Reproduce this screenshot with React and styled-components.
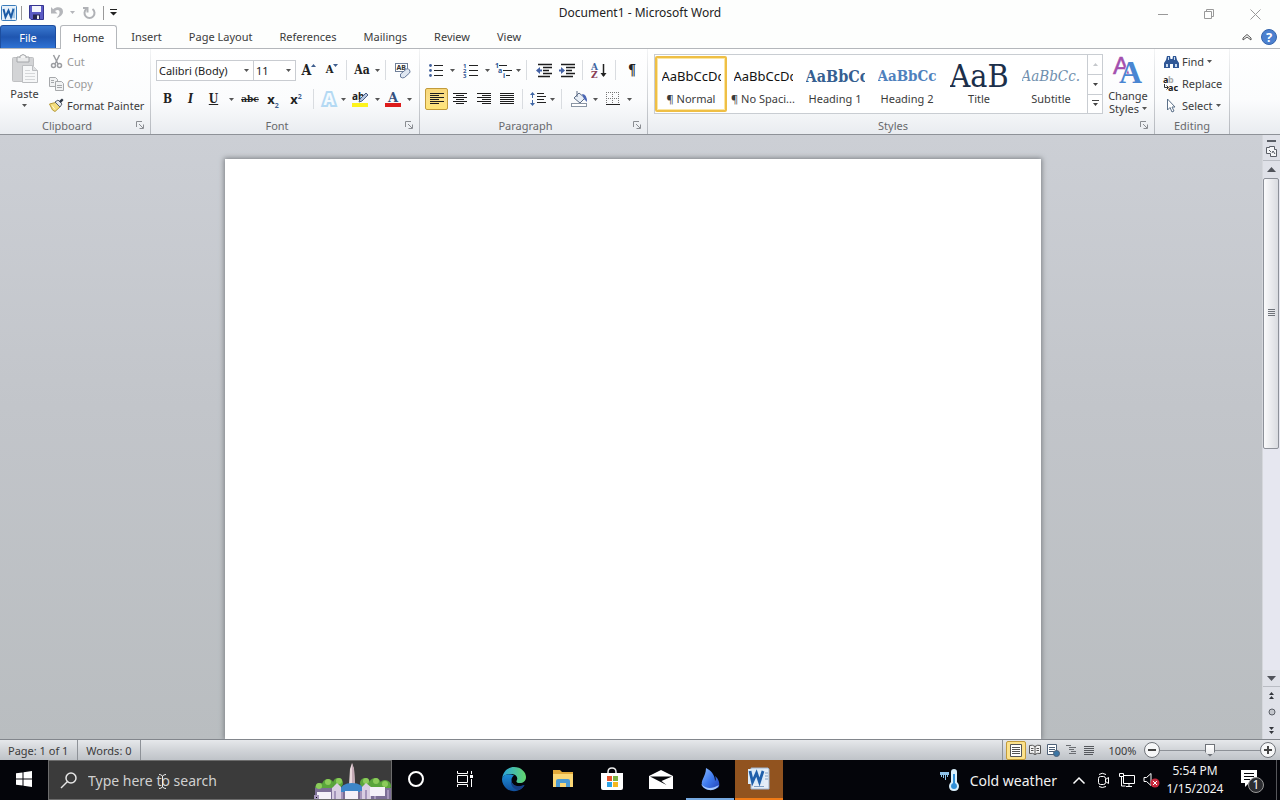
// Import React
import React from 'react';
// Import Styled Components
import styled, { createGlobalStyle, css } from 'styled-components';

// Styles
const GlobalStyle = createGlobalStyle`
  * {
    box-sizing: border-box;
  }
  body {
    margin: 0;
    font-family: 'Noto Sans', 'Open Sans', sans-serif;
    font-size: 11px;
    color: #3b3b3b;
    overflow: hidden;
  }
  button, select, input {
    font: inherit;
    color: inherit;
    border: 0;
    padding: 0;
    margin: 0;
    background: none;
    outline: none;
  }
  svg {
    display: block;
    flex: none;
    overflow: visible;
  }
`;

const Desktop = styled.div`
  display: flex;
  flex-direction: column;
  height: 100vh;
  background: #fdfefd;
`;

// Title bar
const TitleBar = styled.header`
  display: grid;
  grid-template-columns: 1fr auto 1fr;
  align-items: center;
  height: 25px;
`;

const QuickAccess = styled.div`
  display: flex;
  align-items: center;
  gap: 3px;
  height: 22px;
  padding-left: 1px;
`;

const PlainButton = styled.button`
  display: flex;
  align-items: center;
  justify-content: center;
  flex: none;
  width: ${(props) => props.$w || 22}px;
`;

const Title = styled.h1`
  margin: 0;
  font-size: 12px;
  font-weight: normal;
  color: #222;
`;

const WindowButtons = styled.div`
  display: flex;
  justify-content: flex-end;
  padding: 3px 2px 0 0;
`;

// Tabs
const TabBar = styled.nav`
  display: flex;
  height: 24px;
  border-bottom: 1px solid #b4b7bb;
`;

const FileTab = styled.button`
  width: 56px;
  margin-right: 4px;
  color: white;
  border: 1px solid #1d4e9f;
  border-bottom: 0;
  border-radius: 3px 3px 0 0;
  background: linear-gradient(#3a78cf, #1f56b0 50%, #2f72d4);
`;

const Tab = styled.button`
  padding: 0 13px 0 14px;
  ${(props) =>
    props.$active &&
    css`
      padding: 0 12px;
      margin-bottom: -1px;
      border: 1px solid #b4b7bb;
      border-bottom: 0;
      border-radius: 3px 3px 0 0;
      background: white;
    `}
`;

const TabTools = styled.div`
  display: flex;
  align-items: center;
  margin-left: auto;
`;

// Ribbon
const RibbonBar = styled.div`
  display: flex;
  height: 86px;
  flex: none;
  background: linear-gradient(#ffffff, #fbfcfd 60%, #e9ecf0);
  border-bottom: 1px solid #8e9298;
`;

const Group = styled.section`
  display: flex;
  flex-direction: column;
  flex: none;
  width: ${(props) => props.$w}px;
  border-right: 1px solid;
  border-image: linear-gradient(#f4f5f6, #b3b7bd) 1;
`;

const GroupBody = styled.div`
  display: flex;
  flex: 1;
  min-height: 0;
  padding: ${(props) => props.$pad || '0'};
`;

const GroupFooter = styled.div`
  display: flex;
  align-items: center;
  height: 18px;
  padding: 0 2px;
  color: #68696c;
`;

const GroupTitle = styled.span`
  flex: 1;
  text-align: center;
`;

const Rows = styled.div`
  display: flex;
  flex-direction: column;
  gap: ${(props) => props.$gap || 0}px;
`;

const Row = styled.div`
  display: flex;
  align-items: center;
  height: 22px;
`;

const BigButton = styled.button`
  display: flex;
  flex-direction: column;
  align-items: center;
  width: ${(props) => props.$w}px;
  padding-top: ${(props) => props.$top || 0}px;
  line-height: 13px;
  white-space: nowrap;

  > svg {
    margin-bottom: 3px;
  }
`;

const LabelButton = styled.button`
  display: flex;
  align-items: center;
  gap: ${(props) => props.$gap || 3}px;
  height: 22px;
  color: ${(props) => (props.disabled ? '#9a9a9a' : '#3b3b3b')};
  white-space: nowrap;
`;

const IconSlot = styled.span`
  display: grid;
  place-items: center;
  width: 16px;
`;

const PasteArrow = styled.span`
  padding-top: 4px;
`;

const WithArrow = styled.span`
  display: flex;
  align-items: center;
  gap: 3px;
`;

const ToolButton = styled.button`
  display: flex;
  align-items: center;
  justify-content: center;
  flex: none;
  width: ${(props) => props.$w}px;
  height: 22px;
  ${(props) =>
    props.$on &&
    css`
      border: 1px solid #c29b3b;
      border-radius: 2px;
      background: linear-gradient(#f8d779, #fbe08a 50%, #ffe575);
    `}
`;

const Letter = styled.span`
  font-family: 'DejaVu Serif Condensed', 'DejaVu Serif', serif;
  font-size: ${(props) => props.$size || 12}px;
  line-height: 16px;
  font-weight: ${(props) => (props.$light ? 'normal' : 'bold')};
  font-style: ${(props) => (props.$italic ? 'italic' : 'normal')};
  text-decoration: ${(props) => props.$line || 'none'};
  color: #222;
`;

const Script = styled.span`
  font-size: 13px;
  font-weight: bold;
  line-height: 16px;
  color: #222;

  sub,
  sup {
    font-size: 7px;
    line-height: 0;
    color: #3f5f8f;
  }
`;

const Rule = styled.span`
  flex: none;
  width: 1px;
  height: ${(props) => props.$h || 20}px;
  margin: 0 ${(props) => (props.$w - 1) >> 1}px;
  background: ${(props) => props.$color || '#d9dce0'};
`;

const Combo = styled.label`
  display: grid;
  align-items: center;
  width: ${(props) => props.$w}px;
  height: 21px;
  border: 1px solid #c9ccd1;
  background: white;

  & + & {
    border-left: 0;
  }

  > * {
    grid-area: 1 / 1;
  }

  > svg {
    justify-self: end;
    margin-right: 4px;
    pointer-events: none;
  }
`;

const Select = styled.select`
  appearance: none;
  width: 100%;
  padding-left: 2px;
  color: #222;
`;

// Styles gallery
const Gallery = styled.div`
  display: flex;
  height: 60px;
  border: 1px solid #c9cdd2;
  background: white;
`;

const StyleItem = styled.button`
  display: flex;
  flex-direction: column;
  align-items: center;
  width: 72px;
  height: 56px;
  margin-top: 1px;
  padding: ${(props) => (props.$on ? 3 : 5)}px 0 0;
  ${(props) =>
    props.$on &&
    css`
      border: 2px solid #efbf45;
      border-radius: 2px;
      box-shadow: inset 0 0 0 1px #fbe6a2;
    `}
`;

const Sample = styled.span`
  display: flex;
  align-items: center;
  flex: none;
  width: 59px;
  height: 30px;
  overflow: hidden;
  white-space: nowrap;
  font-family: ${(props) => props.$font || "'Noto Sans', sans-serif"};
  font-size: ${(props) => props.$size || 13}px;
  font-weight: ${(props) => props.$weight || 'normal'};
  font-style: ${(props) => props.$style || 'normal'};
  color: ${(props) => props.$color || '#111'};
`;

const GalleryScroll = styled.div`
  display: grid;
  grid-template-rows: repeat(3, 1fr);
  width: 15px;
  border-left: 1px solid #c9cdd2;

  button {
    display: grid;
    place-items: center;
  }

  button + button {
    border-top: 1px solid #c9cdd2;
  }
`;

// Document
const Workspace = styled.main`
  display: flex;
  flex: 1;
  min-height: 0;
  background: linear-gradient(#cccfd5, #c2c5ca 45%, #b9bdc0);
`;

const Canvas = styled.div`
  display: flex;
  justify-content: center;
  flex: 1;
  padding: 24px 0 0 3px;
  overflow: hidden;
`;

const Page = styled.article`
  width: 816px;
  background: white;
  box-shadow: 0 0 5px 1px #7d8085;
`;

const ScrollColumn = styled.aside`
  display: flex;
  flex-direction: column;
  width: 18px;
  border-left: 1px solid #d5d7dc;
  background: #dfe1e8;
`;

const ScrollButton = styled.button`
  display: grid;
  place-items: center;
  flex: none;
  height: ${(props) => props.$h || 18}px;
  border-bottom: ${(props) => (props.$divided ? '1px solid #b9bcc3' : '0')};
`;

const ScrollTrack = styled.div`
  flex: 1;
  padding-right: 1px;
  background: #e6e7f0;
`;

const ScrollThumb = styled.div`
  display: grid;
  place-items: center;
  height: 55%;
  border: 1px solid #8d9199;
  border-radius: 2px;
  background: linear-gradient(90deg, #fbfbfc, #d9dbe0);
`;

// Status bar
const StatusBar = styled.footer`
  display: flex;
  align-items: center;
  justify-content: space-between;
  height: 21px;
  flex: none;
  border-top: 1px solid #82868c;
  background: linear-gradient(#e6e8eb, #d3d6da 45%, #bfc3c8);
`;

const StatusSide = styled.div`
  display: flex;
  align-items: center;
  height: 100%;
`;

const StatusText = styled.span`
  padding: 0 9px 0 8px;
  line-height: 19px;
`;

const ViewGroup = styled.div`
  display: flex;
  padding-left: 3px;
`;

const ViewButton = styled.button`
  display: grid;
  place-items: center;
  width: 18px;
  height: 19px;
  ${(props) =>
    props.$on &&
    css`
      width: 20px;
      border: 1px solid #c29b3b;
      border-radius: 2px;
      background: #fce28c;
    `}
`;

const Percent = styled.button`
  width: 46px;
  padding-left: 3px;
`;

const RoundButton = styled.button`
  display: grid;
  place-items: center;
  flex: none;
  width: 16px;
  height: 16px;
  border: 1px solid #6f7379;
  border-radius: 50%;
  background: #f6f7f8;
`;

const ZoomRange = styled.input`
  appearance: none;
  width: 100px;
  height: 16px;
  background: linear-gradient(#8d9197, #8d9197) center / 100% 1px no-repeat;

  &::-webkit-slider-thumb {
    appearance: none;
    width: 10px;
    height: 13px;
    background: linear-gradient(#ffffff, #e9eaec) center 1px / 8px 9px no-repeat
      #6f7379;
    clip-path: polygon(0 0, 100% 0, 100% 65%, 50% 100%, 0 65%);
  }
`;

const Corner = styled.span`
  width: 4px;
`;

// Taskbar
const TaskBar = styled.div`
  display: flex;
  height: 40px;
  flex: none;
  background: #04050a;
  color: #f2f2f2;
`;

const TaskList = styled.div`
  display: flex;
  gap: 1px;
`;

const TaskButton = styled.button`
  display: grid;
  place-items: center;
  width: 48px;
  height: 40px;
  border-bottom: 2px solid ${(props) => props.$line || 'transparent'};
  background: ${(props) => props.$bg || 'transparent'};
`;

const SearchBox = styled.label`
  position: relative;
  display: flex;
  align-items: center;
  gap: 11px;
  width: 344px;
  padding-left: 12px;
  overflow: hidden;
  background: #3b3b3b;
  border: 1px solid #6c6c6c;
`;

const SearchInput = styled.input`
  flex: 1;
  min-width: 0;
  font-size: 14px;

  &::placeholder {
    color: #d0d0d0;
    opacity: 1;
  }
`;

const Pointer = styled.svg`
  position: absolute;
  left: 108px;
  top: 12px;
`;

const Tray = styled.div`
  display: flex;
  align-items: center;
  margin-left: auto;
`;

const TrayIcon = styled.button`
  display: grid;
  place-items: center;
  width: 24px;
  height: 40px;
`;

const Weather = styled.button`
  display: flex;
  align-items: center;
  gap: 10px;
  margin-right: 10px;
  font-size: 14px;
  white-space: nowrap;
`;

const Clock = styled.time`
  width: 64px;
  font-size: 12px;
  line-height: 18px;
  text-align: center;
`;

const Notifications = styled.button`
  display: grid;
  place-items: center;
  width: 50px;
  height: 40px;
  border-right: 1px solid #55565a;
  margin-right: 3px;
`;

// Small arrow used by every drop down
const Arrow = ({ color = '#555' }) => (
  <svg width="5" height="3" viewBox="0 0 5 3">
    <path d="M0 0h5L2.500 3z" fill={color} />
  </svg>
);

const Drop = ({ w, label }) => (
  <ToolButton $w={w} aria-label={label}>
    <Arrow />
  </ToolButton>
);

const Launcher = () => (
  <svg width="8" height="8" viewBox="0 0 8 8" fill="none" stroke="#8a8d92">
    <path d="M.5 6V.5H6M3 3l4 4M7.500 3.500v4h-4" />
  </svg>
);

// Horizontal lines, each one given as [x, width]
const Lines = ({ rows, width = 14, step = 2 }) => (
  <svg width={width} height={rows.length * step} fill="#1d1d1d">
    {rows.map(([x, w], i) => (
      <rect key={i} x={x} y={i * step} width={w} height="1" />
    ))}
  </svg>
);

const WordLogo = () => (
  <svg width="16" height="16" viewBox="0 0 16 16">
    <rect x=".5" y=".5" width="15" height="15" rx="1" fill="#e7f1fa" stroke="#3b7cba" />
    <path d="M11 3h3v10h-3z" fill="#a9cbe8" />
    <path d="M2.500 4l2 8L7.500 5.500 10 12l2.500-8" fill="none" stroke="#1d5ca6" strokeWidth="2" />
  </svg>
);

const SaveIcon = () => (
  <svg width="15" height="15" viewBox="0 0 15 15">
    <path d="M.5.5h14v14H2l-1.500-1.500z" fill="#5b5bc4" stroke="#35358f" />
    <path d="M3 1h9v6H3z" fill="#f3f5fb" />
    <path d="M4 9.500h7V14H4z" fill="#26264f" />
    <path d="M8 10.500h2V14H8z" fill="#eee" />
  </svg>
);

const UndoIcon = () => (
  <svg width="14" height="14" viewBox="0 0 14 14">
    <path d="M1 1v6.500h6.500L5 5c3-2 5-.5 4.500 2-.3 2-1.500 3.500-3 5 4-1 6.500-3.500 6.500-6.500C13 1 7 0 3.200 3.200z" fill="#b4b6ba" />
  </svg>
);

const RedoIcon = () => (
  <svg width="13" height="13" viewBox="0 0 13 13" fill="none" stroke="#b0b2b6" strokeWidth="2">
    <path d="M3.500 3A5 5 0 1 0 9.500 3" />
    <path d="M0 2h4.500v4.500" />
  </svg>
);

const PasteIcon = () => (
  <svg width="28" height="30" viewBox="0 0 28 30">
    <rect x="1.500" y="3.500" width="21" height="24" rx="1" fill="#d3d4d6" stroke="#c0c1c3" />
    <path d="M6 3h12v5H6z" fill="#e9eaeb" stroke="#a4a6a9" />
    <path d="M9 4V2q3-3 6 0v2" fill="#f4f4f4" stroke="#a4a6a9" />
    <path d="M11.500 11.500h10l5 5v12h-15z" fill="#f6f7f8" stroke="#bcbec1" />
    <path d="M21.500 11.500v5h5" fill="#dfe0e2" stroke="#bcbec1" />
    <path d="M14 19.500h10M14 22.500h10M14 25.500h10M14 16.500h5" stroke="#d5d7d9" />
  </svg>
);

const CutIcon = () => (
  <svg width="15" height="15" viewBox="0 0 15 15" fill="none" stroke="#9b9da1" strokeWidth="1.500">
    <path d="M4.500 1L9 10M10.500 1L6 10" />
    <circle cx="4.500" cy="11.500" r="2" />
    <circle cx="10.500" cy="11.500" r="2" />
  </svg>
);

const CopyIcon = () => (
  <svg width="15" height="14" viewBox="0 0 15 14" fill="#f1f2f3" stroke="#a6a8ab">
    <path d="M.5.5h6l2 2v7h-8z" />
    <path d="M6.500 4.500h6l2 2v7h-8z" />
    <path d="M2 3.500h3M2 5.500h3M8 8.500h5M8 10.500h5" />
  </svg>
);

const PainterIcon = () => (
  <svg width="15" height="14" viewBox="0 0 15 14">
    <path d="M.5 6l6-1.500L11 9l-5 4.500L3.500 12z" fill="#f3dd7c" stroke="#b79c3c" />
    <path d="M3 7.500l3 4" stroke="#fff8d0" />
    <path d="M6 4l3-2 4 4-2 3z" fill="#e4e8ee" stroke="#5a6270" />
    <path d="M10 3L13 .5 14.500 2 12 5z" fill="#2f3846" />
  </svg>
);

const ClearIcon = () => (
  <svg width="17" height="17" viewBox="0 0 17 17">
    <rect x="1.500" y="1.500" width="12" height="8" fill="#fff" stroke="#6f7f98" />
    <text x="2.500" y="8" fontSize="7" fontWeight="bold" fill="#333">AB</text>
    <path d="M6.500 12l6-5q2-1 3 1t0 3l-5 4.500q-2 1-4-.5z" fill="#dfe7f2" stroke="#66799a" />
  </svg>
);

const EffectsIcon = () => (
  <svg width="18" height="18" viewBox="0 0 18 18">
    <text x="9" y="15" fontSize="16" fontWeight="bold" textAnchor="middle" fill="#f5fbff" stroke="#b4d9f3" strokeWidth="4" paintOrder="stroke">A</text>
    <path d="M0 0" stroke="none" />
  </svg>
);

const HighlightIcon = () => (
  <svg width="17" height="17" viewBox="0 0 17 17">
    <rect y="12" width="16" height="4" fill="#fdf31d" />
    <text x="0" y="9" fontSize="10" fontWeight="bold" fill="#222">ab</text>
    <path d="M7 11l1-3 6-6 2 2-6 6z" fill="#b6c6e0" stroke="#4a5d84" />
  </svg>
);

const FontColorIcon = () => (
  <svg width="16" height="17" viewBox="0 0 16 17">
    <rect y="12" width="16" height="4" fill="#dd1c1c" />
    <text x="8" y="11" fontSize="13" fontWeight="bold" textAnchor="middle" fontFamily="DejaVu Serif" fill="#34517f">A</text>
  </svg>
);

const BulletsIcon = () => (
  <svg width="14" height="13" viewBox="0 0 14 13">
    <path d="M5 1.500h9M5 6.500h9M5 11.500h9" stroke="#222" />
    <g fill="#41619b">
      <circle cx="1.500" cy="1.500" r="1.400" />
      <circle cx="1.500" cy="6.500" r="1.400" />
      <circle cx="1.500" cy="11.500" r="1.400" />
    </g>
  </svg>
);

const NumbersIcon = () => (
  <svg width="15" height="15" viewBox="0 0 15 15">
    <path d="M6 2.500h9M6 7.500h9M6 12.500h9" stroke="#222" />
    <g fill="#2d5594" fontSize="6" fontWeight="bold">
      <text x="0" y="5">1</text>
      <text x="0" y="10">2</text>
      <text x="0" y="15">3</text>
    </g>
  </svg>
);

const MultiLevelIcon = () => (
  <svg width="17" height="15" viewBox="0 0 17 15">
    <path d="M4 2.500h8M8 7.500h9M11 12.500h4" stroke="#222" />
    <g fill="#2d5594" fontSize="7" fontWeight="bold">
      <text x="0" y="5">1</text>
      <text x="3" y="10">a</text>
      <text x="8" y="15">i</text>
    </g>
  </svg>
);

const IndentIcon = ({ out }) => (
  <svg width="16" height="13" viewBox="0 0 16 13">
    <path d="M2 .5h14M7 3.500h9M7 6.500h6M7 9.500h9M2 12.500h12" stroke="#1d1d1d" strokeWidth="1.500" />
    <path d={out ? 'M0 6.500L4 3v7z' : 'M6 6.500L2 3v7z'} fill="#4562a5" />
    <path d={out ? 'M3 6.500h3' : 'M0 6.500h3'} stroke="#4562a5" strokeWidth="2" />
  </svg>
);

const SortIcon = () => (
  <svg width="16" height="17" viewBox="0 0 16 17">
    <g fontFamily="DejaVu Serif" fontSize="9" fontWeight="bold">
      <text x="0" y="8" fill="#3d64a0">A</text>
      <text x="0" y="16" fill="#8a3d54">Z</text>
    </g>
    <path d="M12.500 2v12" stroke="#222" strokeWidth="1.500" />
    <path d="M9.500 11h6l-3 4z" fill="#222" />
  </svg>
);

const SpacingIcon = () => (
  <svg width="16" height="16" viewBox="0 0 16 16">
    <path d="M7 2.500h7M7 5.500h9M7 8.500h7M7 11.500h9" stroke="#222" />
    <path d="M2.500 3v10" stroke="#3f66a5" strokeDasharray="4 2" />
    <path d="M0 4l2.500-3L5 4zM0 12l2.500 3L5 12z" fill="#3f66a5" />
  </svg>
);

const FillIcon = () => (
  <svg width="17" height="16" viewBox="0 0 17 16">
    <path d="M3 7l5-5 6 5-5 5z" fill="#e8eef6" stroke="#5c6d86" />
    <path d="M6 0v6" stroke="#5c6d86" />
    <path d="M11 3q5 0 5 8l-3-3z" fill="#4a66b5" />
    <rect x=".5" y="12.500" width="15" height="3" fill="#fff" stroke="#8a95a3" />
  </svg>
);

const BordersIcon = () => (
  <svg width="14" height="14" viewBox="0 0 14 14" fill="none" stroke="#777" strokeDasharray="1 1">
    <path d="M0 .5h14M0 6.500h14M.5 0v12M6.500 0v12M12.500 0v12" />
    <path d="M0 12.500h14" stroke="#222" strokeDasharray="none" />
  </svg>
);

const ChangeStylesIcon = () => (
  <svg width="30" height="32" viewBox="0 0 30 32">
    <text x="0" y="20" fontSize="24" fill="#a34fae" stroke="#a34fae" strokeWidth=".5" fontFamily="Liberation Sans">A</text>
    <text x="6" y="29" fontSize="32" fontWeight="bold" fill="#4a86d2" stroke="#fff" paintOrder="stroke" strokeWidth="1" fontFamily="Liberation Serif">A</text>
  </svg>
);

const FindIcon = () => (
  <svg width="15" height="14" viewBox="0 0 15 14">
    <path d="M2 5l1-4h3l.5 3h2L9 1h3l1 4 2 3v5H9V9H6v4H0V8z" fill="#2f5796" />
    <path d="M2 9h2v3H2zM11 9h2v3h-2zM4 2h1v3H4zM10 2h1v3h-1z" fill="#c7daf1" />
  </svg>
);

const ReplaceIcon = () => (
  <svg width="16" height="16" viewBox="0 0 16 16" fontSize="9" fontWeight="bold">
    <text x="0" y="7" fill="#222">a</text>
    <text x="5" y="7" fill="#aaa">b</text>
    <text x="5" y="15" fill="#222">ac</text>
    <path d="M1.500 8v3.500H5M3.500 9.500l2 2-2 2" fill="none" stroke="#333" />
  </svg>
);

const SelectIcon = () => (
  <svg width="10" height="15" viewBox="0 0 10 15">
    <path d="M1.500 1v11l2.500-2.500L6 14l2-1-2-4h3z" fill="#fff" stroke="#5b7089" />
  </svg>
);

const HelpIcon = () => (
  <svg width="16" height="16" viewBox="0 0 16 16">
    <circle cx="8" cy="8" r="7.500" fill="#4b80cf" stroke="#3565ad" />
    <text x="8" y="12.500" fontSize="13" fontWeight="bold" textAnchor="middle" fill="#fff">?</text>
  </svg>
);

const EdgeIcon = () => (
  <svg width="26" height="26" viewBox="0 0 26 26">
    <defs>
      <linearGradient id="edgeTop" x1="0" x2="1">
        <stop offset="0" stopColor="#2aa5e0" />
        <stop offset="1" stopColor="#63d66b" />
      </linearGradient>
      <linearGradient id="edgeLow" x1="0" x2="0" y1="0" y2="1">
        <stop offset="0" stopColor="#1d8ed8" />
        <stop offset="1" stopColor="#114f9c" />
      </linearGradient>
    </defs>
    <path d="M1 13a12 12 0 0 0 16 11.500c3-1 5-3 6.500-5.500-6 3-13 1-13-5 0-2 1-3.500 2.500-4.500C8 7 2 8 1 13z" fill="url(#edgeLow)" />
    <path d="M1 13C2 5 7 1 13 1c7 0 12 5 12 10 0 4-3 6-6 6-2.500 0-4-1-3.500-2 2-3 0-6.500-4.500-7C6 7.500 2 9 1 13z" fill="url(#edgeTop)" />
    <path d="M10.500 14c-2 4 2 10.500 8 10 2-1 4-3 5-5-6 2.500-13 1-13-5z" fill="#173f86" />
  </svg>
);

const FolderIcon = () => (
  <svg width="22" height="20" viewBox="0 0 22 20">
    <path d="M1 1h7l2 2h11v15H1z" fill="#e2a93a" />
    <path d="M1 5h20v13H1z" fill="#fbd775" />
    <path d="M4 18v-6q0-2 2-2h10q2 0 2 2v6h-4v-4H8v4z" fill="#4c9ad2" />
  </svg>
);

const StoreIcon = () => (
  <svg width="24" height="24" viewBox="0 0 24 24">
    <path d="M8 7V5q0-4 4-4t4 4v2" fill="none" stroke="#eee" strokeWidth="1.500" />
    <path d="M1 6h22v15q0 2-2 2H3q-2 0-2-2z" fill="#fff" />
    <path d="M7 9h5v5H7z" fill="#e8532b" />
    <path d="M13 9h5v5h-5z" fill="#7cb342" />
    <path d="M7 15h5v5H7z" fill="#2ea3e6" />
    <path d="M13 15h5v5h-5z" fill="#f6b820" />
  </svg>
);

const MailIcon = () => (
  <svg width="24" height="20" viewBox="0 0 24 20">
    <path d="M0 7l12-6 12 6v13H0z" fill="#fff" />
    <path d="M1 7.500h22L12.500 12l5 4z" fill="#05060a" />
  </svg>
);

const FlameIcon = () => (
  <svg width="22" height="24" viewBox="0 0 22 24">
    <defs>
      <linearGradient id="flame" x1="0" x2="1" y1="0" y2="1">
        <stop offset="0" stopColor="#8dbcff" />
        <stop offset=".5" stopColor="#3d79ee" />
        <stop offset="1" stopColor="#2440b4" />
      </linearGradient>
    </defs>
    <path d="M7 1c6 3 9 8 9 13 1-1 1-3 0-5 4 3 5 8 4 11-5 4-13 4-16 0C0 14 7 10 7 1z" fill="url(#flame)" />
    <path d="M2 17c5 5 11 5 18 1-3 7-14 7-18-1z" fill="#a5c9ff" />
  </svg>
);

const WordTaskIcon = () => (
  <svg width="24" height="24" viewBox="0 0 24 24">
    <path d="M4 1h17l1 1v20H4z" fill="#e5edf6" stroke="#9db4d0" />
    <path d="M18 6h3M18 9h3M18 12h3M7 19.500h10" stroke="#7f9fc4" />
    <path d="M1 2h16v15H1z" fill="#dcebf8" />
    <path d="M3 4l2.500 11L9.500 6l3 9L16 4" fill="none" stroke="#1f5faa" strokeWidth="2.800" />
  </svg>
);

// Trees, walls and tower shown at the end of the search box
const CastleArt = () => (
  <svg width="76" height="38" viewBox="0 0 76 38">
    <g fill="#5aa53c">
      <circle cx="5" cy="27" r="5" />
      <circle cx="13" cy="24" r="6" />
      <circle cx="23" cy="22" r="5" />
      <circle cx="50" cy="22" r="5" />
      <circle cx="60" cy="23" r="6" />
      <circle cx="70" cy="25" r="6" />
    </g>
    <path d="M0 27h76v11H0z" fill="#7c6f96" />
    <g fill="#8ccb5b">
      <circle cx="4" cy="25" r="3" />
      <circle cx="13" cy="21" r="3" />
      <circle cx="24" cy="20" r="3" />
      <circle cx="51" cy="20" r="3" />
      <circle cx="61" cy="20" r="3" />
      <circle cx="70" cy="23" r="3" />
    </g>
    <path d="M34 24l1-16 2-6 2 6 1 16z" fill="#e9d7dc" />
    <path d="M37 2l2 6 1 16h-3z" fill="#c3a9b5" />
    <path d="M24 31q2-9 13-9t13 9z" fill="#3d86c9" />
    <path d="M17 27l5-5 4 4v12h-9zM47 26l4-4 5 4v12h-9z" fill="#d9cfe2" />
    <path d="M2 31h14v7H2zM30 30h13v8H30zM55 26h15v9H55z" fill="#f4f1f8" />
    <path d="M0 35h3v3H0zM20 30v8M27 31v7M46 30v8M51 29v9M60 35v3M73 29v9" stroke="#a596bb" strokeWidth="2" />
  </svg>
);

const tabs = ['Home', 'Insert', 'Page Layout', 'References', 'Mailings', 'Review', 'View'];

const serif = "'DejaVu Serif Condensed', 'DejaVu Serif', serif";

const styleList = [
  { name: '¶ Normal', text: 'AaBbCcDc' },
  { name: '¶ No Spaci...', text: 'AaBbCcDc' },
  { name: 'Heading 1', text: 'AaBbCc', font: serif, size: 16, weight: 'bold', color: '#365f91' },
  { name: 'Heading 2', text: 'AaBbCc', font: serif, size: 15, weight: 'bold', color: '#4f81bd' },
  { name: 'Title', text: 'AaB', font: serif, size: 32, color: '#1c2f4a' },
  { name: 'Subtitle', text: 'AaBbCc.', font: serif, size: 15, style: 'italic', color: '#6f8fae' },
];

const left = [[0, 14], [0, 9], [0, 14], [0, 9], [0, 14], [0, 9]];
const center = [[0, 14], [3, 8], [0, 14], [3, 8], [0, 14], [3, 8]];
const right = [[0, 14], [5, 9], [0, 14], [5, 9], [0, 14], [5, 9]];
const full = [[0, 14], [0, 14], [0, 14], [0, 14], [0, 14], [0, 14]];

function RibbonGroup({ title, width, pad, launcher = true, children }) {
  return (
    <Group $w={width} aria-label={title}>
      <GroupBody $pad={pad}>{children}</GroupBody>
      <GroupFooter>
        <GroupTitle>{title}</GroupTitle>
        {launcher && (
          <PlainButton $w={16} aria-label={`${title} options`}>
            <Launcher />
          </PlainButton>
        )}
      </GroupFooter>
    </Group>
  );
}

function Ribbon() {
  return (
    <RibbonBar>
      <RibbonGroup title="Clipboard" width={151} pad="2px 0 0 1px">
        <BigButton $w={47} $top={3}>
          <PasteIcon />
          <span>Paste</span>
          <PasteArrow>
            <Arrow />
          </PasteArrow>
        </BigButton>
        <Rows>
          <LabelButton disabled>
            <IconSlot>
              <CutIcon />
            </IconSlot>
            Cut
          </LabelButton>
          <LabelButton disabled>
            <IconSlot>
              <CopyIcon />
            </IconSlot>
            Copy
          </LabelButton>
          <LabelButton>
            <IconSlot>
              <PainterIcon />
            </IconSlot>
            Format Painter
          </LabelButton>
        </Rows>
      </RibbonGroup>

      <RibbonGroup title="Font" width={269} pad="10px 0 0 5px">
        <Rows $gap={7}>
          <Row>
            <Combo $w={98}>
              <Select aria-label="Font name">
                <option>Calibri (Body)</option>
              </Select>
              <Arrow />
            </Combo>
            <Combo $w={42}>
              <Select aria-label="Font size">
                <option>11</option>
              </Select>
              <Arrow />
            </Combo>
            <ToolButton $w={26} aria-label="Grow font">
              <Letter $size={14}>A</Letter>
              <svg width="5" height="14" fill="#3f5f8f">
                <path d="M0 4l2.500-3L5 4z" />
              </svg>
            </ToolButton>
            <ToolButton $w={20} aria-label="Shrink font">
              <Letter $size={11}>A</Letter>
              <svg width="5" height="14" fill="#3f5f8f">
                <path d="M0 1h5L2.500 4z" />
              </svg>
            </ToolButton>
            <Rule $w={9} />
            <ToolButton $w={22} aria-label="Change case">
              <Letter>Aa</Letter>
            </ToolButton>
            <Drop w={8} label="Case options" />
            <Rule $w={9} />
            <ToolButton $w={24} aria-label="Clear formatting">
              <ClearIcon />
            </ToolButton>
          </Row>
          <Row>
            <ToolButton $w={23} aria-label="Bold">
              <Letter>B</Letter>
            </ToolButton>
            <ToolButton $w={23} aria-label="Italic">
              <Letter $italic>I</Letter>
            </ToolButton>
            <ToolButton $w={23} aria-label="Underline">
              <Letter $line="underline">U</Letter>
            </ToolButton>
            <Drop w={12} label="Underline options" />
            <ToolButton $w={26} aria-label="Strikethrough">
              <Letter $size={10} $line="line-through">abc</Letter>
            </ToolButton>
            <ToolButton $w={20} aria-label="Subscript">
              <Script>
                x<sub>2</sub>
              </Script>
            </ToolButton>
            <ToolButton $w={26} aria-label="Superscript">
              <Script>
                x<sup>2</sup>
              </Script>
            </ToolButton>
            <Rule $w={9} />
            <ToolButton $w={22} aria-label="Text effects">
              <EffectsIcon />
            </ToolButton>
            <Drop w={6} label="Text effects options" />
            <ToolButton $w={28} aria-label="Highlight">
              <HighlightIcon />
            </ToolButton>
            <Drop w={6} label="Highlight options" />
            <ToolButton $w={26} aria-label="Font color">
              <FontColorIcon />
            </ToolButton>
            <Drop w={6} label="Font color options" />
          </Row>
        </Rows>
      </RibbonGroup>

      <RibbonGroup title="Paragraph" width={228} pad="10px 0 0 5px">
        <Rows $gap={7}>
          <Row>
            <ToolButton $w={22} aria-label="Bullets">
              <BulletsIcon />
            </ToolButton>
            <Drop w={10} label="Bullets options" />
            <ToolButton $w={26} aria-label="Numbering">
              <NumbersIcon />
            </ToolButton>
            <Drop w={8} label="Numbering options" />
            <ToolButton $w={24} aria-label="Multilevel list">
              <MultiLevelIcon />
            </ToolButton>
            <Drop w={6} label="Multilevel options" />
            <Rule $w={11} />
            <ToolButton $w={24} aria-label="Decrease indent">
              <IndentIcon out />
            </ToolButton>
            <ToolButton $w={22} aria-label="Increase indent">
              <IndentIcon />
            </ToolButton>
            <Rule $w={9} />
            <ToolButton $w={24} aria-label="Sort">
              <SortIcon />
            </ToolButton>
            <Rule $w={9} />
            <ToolButton $w={24} aria-label="Show marks">
              <Letter $size={14}>¶</Letter>
            </ToolButton>
          </Row>
          <Row>
            <ToolButton $w={23} $on aria-label="Align left">
              <Lines rows={left} />
            </ToolButton>
            <ToolButton $w={24} aria-label="Center">
              <Lines rows={center} />
            </ToolButton>
            <ToolButton $w={24} aria-label="Align right">
              <Lines rows={right} />
            </ToolButton>
            <ToolButton $w={22} aria-label="Justify">
              <Lines rows={full} />
            </ToolButton>
            <Rule $w={9} />
            <ToolButton $w={22} aria-label="Line spacing">
              <SpacingIcon />
            </ToolButton>
            <Drop w={6} label="Line spacing options" />
            <Rule $w={13} />
            <ToolButton $w={22} aria-label="Shading">
              <FillIcon />
            </ToolButton>
            <Drop w={10} label="Shading options" />
            <ToolButton $w={26} aria-label="Borders">
              <BordersIcon />
            </ToolButton>
            <Drop w={6} label="Borders options" />
          </Row>
        </Rows>
      </RibbonGroup>

      <RibbonGroup title="Styles" width={507} pad="5px 0 0 6px">
        <Gallery>
          {styleList.map((item, i) => (
            <StyleItem key={item.name} $on={i === 0}>
              <Sample
                $font={item.font}
                $size={item.size}
                $weight={item.weight}
                $style={item.style}
                $color={item.color}
              >
                {item.text}
              </Sample>
              {item.name}
            </StyleItem>
          ))}
          <GalleryScroll>
            <button aria-label="Previous styles">
              <svg width="5" height="3">
                <path d="M0 3h5L2.500 0z" fill="#c5c8cc" />
              </svg>
            </button>
            <button aria-label="Next styles">
              <Arrow color="#444" />
            </button>
            <button aria-label="More styles">
              <svg width="7" height="7">
                <path d="M0 0h7v1H0zM1 3h5L3.500 6z" fill="#444" />
              </svg>
            </button>
          </GalleryScroll>
        </Gallery>
        <BigButton $w={50}>
          <ChangeStylesIcon />
          <span>Change</span>
          <WithArrow>
            Styles <Arrow />
          </WithArrow>
        </BigButton>
      </RibbonGroup>

      <RibbonGroup title="Editing" width={75} pad="2px 0 0 8px" launcher={false}>
        <Rows>
          <LabelButton>
            <IconSlot>
              <FindIcon />
            </IconSlot>
            Find <Arrow />
          </LabelButton>
          <LabelButton>
            <IconSlot>
              <ReplaceIcon />
            </IconSlot>
            Replace
          </LabelButton>
          <LabelButton>
            <IconSlot>
              <SelectIcon />
            </IconSlot>
            Select <Arrow />
          </LabelButton>
        </Rows>
      </RibbonGroup>
    </RibbonBar>
  );
}

function Scroller() {
  return (
    <ScrollColumn>
      <ScrollButton $h={26} $divided aria-label="View ruler">
        <svg width="13" height="20" viewBox="0 0 13 20" fill="none" stroke="#5a5e66">
          <path d="M2 3h9" strokeWidth="2" />
          <path d="M1.500 9.500h3v-1h5v3h2v7h-6v-3h-4z" fill="#f5f6f8" />
          <path d="M4 12l2 2M7 15l1-2 2 3" />
        </svg>
      </ScrollButton>
      <ScrollButton $h={17} aria-label="Scroll up">
        <svg width="9" height="5">
          <path d="M0 5h9L4.500 0z" fill="#50535a" />
        </svg>
      </ScrollButton>
      <ScrollTrack>
        <ScrollThumb>
          <svg width="7" height="8" stroke="#6f737a">
            <path d="M0 .5h7M0 2.500h7M0 4.500h7M0 6.500h7" />
          </svg>
        </ScrollThumb>
      </ScrollTrack>
      <ScrollButton $h={17} $divided aria-label="Scroll down">
        <svg width="9" height="5">
          <path d="M0 0h9L4.500 5z" fill="#50535a" />
        </svg>
      </ScrollButton>
      <ScrollButton $h={16} aria-label="Previous page">
        <svg width="5" height="7">
          <path d="M0 3h5L2.500 0zM0 7h5L2.500 4z" fill="#33363c" />
        </svg>
      </ScrollButton>
      <ScrollButton $h={18} aria-label="Browse object">
        <svg width="8" height="8">
          <circle cx="4" cy="4" r="3" fill="#c3c6cc" stroke="#5a5e66" />
        </svg>
      </ScrollButton>
      <ScrollButton $h={18} aria-label="Next page">
        <svg width="5" height="7">
          <path d="M0 0h5L2.500 3zM0 4h5L2.500 7z" fill="#33363c" />
        </svg>
      </ScrollButton>
    </ScrollColumn>
  );
}

function Status() {
  return (
    <StatusBar>
      <StatusSide>
        <StatusText>Page: 1 of 1</StatusText>
        <Rule $w={1} $color="#8e9298" />
        <StatusText>Words: 0</StatusText>
        <Rule $w={1} $color="#8e9298" />
      </StatusSide>
      <StatusSide>
        <Rule $w={1} $color="#8e9298" />
        <ViewGroup>
          <ViewButton $on aria-label="Print layout">
            <svg width="12" height="13" fill="#fff" stroke="#555">
              <path d="M.5.5h11v12H.5zM2 3.500h8M2 5.500h8M2 7.500h8M2 9.500h8" />
            </svg>
          </ViewButton>
          <ViewButton aria-label="Full screen reading">
            <svg width="12" height="12" fill="#f4f4f4" stroke="#555">
              <path d="M.5 1.500q3-1 5.500 1 2.500-2 5.500-1v8q-3-1-5.500 1-2.500-2-5.500-1zM6 2v9M2 4.500h2.500M2 6.500h2.500M7.500 4.500H10M7.500 6.500H10" />
            </svg>
          </ViewButton>
          <ViewButton aria-label="Web layout">
            <svg width="13" height="13" fill="#fff" stroke="#4d6077">
              <path d="M.5.5h9v10h-9zM2 3.500h6M2 5.500h6M2 7.500h5" />
              <circle cx="9.500" cy="9.500" r="3" fill="#3b76a5" />
            </svg>
          </ViewButton>
          <ViewButton aria-label="Outline">
            <svg width="10" height="10" stroke="#6a6d72">
              <path d="M0 .5h5M3 2.500h7M3 4.500h5M5 6.500h5M3 8.500h7" />
            </svg>
          </ViewButton>
          <ViewButton aria-label="Draft">
            <svg width="10" height="9" stroke="#55585d">
              <path d="M0 .5h10M0 2.500h10M0 4.500h10M0 6.500h10M0 8.500h9" />
            </svg>
          </ViewButton>
        </ViewGroup>
        <Percent>100%</Percent>
        <RoundButton aria-label="Zoom out">
          <svg width="8" height="8" fill="#444">
            <path d="M0 3h8v2H0z" />
          </svg>
        </RoundButton>
        <ZoomRange type="range" aria-label="Zoom" min="0" max="100" defaultValue="50" />
        <RoundButton aria-label="Zoom in">
          <svg width="8" height="8" fill="#444">
            <path d="M0 3h8v2H0zM3 0h2v8H3z" />
          </svg>
        </RoundButton>
        <Corner />
      </StatusSide>
    </StatusBar>
  );
}

function Tasks() {
  return (
    <TaskBar>
      <TaskButton aria-label="Start">
        <svg width="16" height="16" fill="#fff">
          <path d="M0 2.300L6.500 1.400v6.100H0zM7.500 1.200L16 0v7.500H7.500zM0 8.500h6.500v6.100L0 13.700zM7.500 8.500H16V16l-8.500-1.200z" />
        </svg>
      </TaskButton>
      <SearchBox>
        <svg width="16" height="16" fill="none" stroke="#e6e6e6" strokeWidth="1.500">
          <circle cx="10" cy="6" r="5" />
          <path d="M6.500 9.500L0 16" />
        </svg>
        <SearchInput type="text" placeholder="Type here to search" />
        <CastleArt />
        <Pointer width="11" height="18" fill="none" stroke="#eee">
          <path d="M2 1.500q2 0 3.500 1.500Q7 1.500 9 1.500M5.500 3v11M2 15.500q2 0 3.500-1.500Q7 15.500 9 15.500" />
        </Pointer>
      </SearchBox>
      <TaskList>
        <TaskButton aria-label="Cortana">
          <svg width="16" height="16" fill="none" stroke="#fff" strokeWidth="2">
            <circle cx="8" cy="8" r="7" />
          </svg>
        </TaskButton>
        <TaskButton aria-label="Task view">
          <svg width="17" height="16" fill="none" stroke="#fff">
            <path d="M.5 0v2.500h10V0M.5 4.500h10v7H.5zM.5 16v-2.500h10V16M14.500 0v3M14.500 8v8" />
            <path d="M13 4h3v3h-3z" fill="#fff" stroke="none" />
          </svg>
        </TaskButton>
        <TaskButton aria-label="Edge">
          <EdgeIcon />
        </TaskButton>
        <TaskButton aria-label="File Explorer">
          <FolderIcon />
        </TaskButton>
        <TaskButton aria-label="Store">
          <StoreIcon />
        </TaskButton>
        <TaskButton aria-label="Mail">
          <MailIcon />
        </TaskButton>
        <TaskButton $line="#76a9e0" aria-label="Browser">
          <FlameIcon />
        </TaskButton>
        <TaskButton $line="#f07a16" $bg="#91531f" aria-label="Word">
          <WordTaskIcon />
        </TaskButton>
      </TaskList>
      <Tray>
        <Weather>
          <svg width="20" height="24" viewBox="0 0 20 24">
            <path d="M0 4h9v3H8v2H7V7H6v5H5V7H4v3H3V7H2v2H1V7H0z" fill="#8fc3ea" />
            <path d="M11 4q0-3 3-3t3 3v10q2 2 2 4 0 5-5 5t-5-5q0-2 2-4z" fill="#d9effb" />
            <path d="M13 6h2v9q2 1 2 3 0 3-3 3t-3-3q0-2 2-3z" fill="#2f8fd8" />
          </svg>
          Cold weather
        </Weather>
        <TrayIcon aria-label="Hidden icons">
          <svg width="12" height="7" fill="none" stroke="#fff" strokeWidth="1.500">
            <path d="M.5 6.500L6 1l5.500 5.500" />
          </svg>
        </TrayIcon>
        <TrayIcon aria-label="Meet now">
          <svg width="13" height="16" fill="none" stroke="#fff">
            <rect x="1.500" y="4.500" width="7" height="8" rx="2" />
            <path d="M8.500 7.500l3-2v6l-3-2M2 2.500Q5 0 9 2.500M2 14.500q3 2 7 0" />
          </svg>
        </TrayIcon>
        <TrayIcon aria-label="Network">
          <svg width="16" height="15" fill="none" stroke="#fff">
            <path d="M4.500 2.500h11v8h-11zM7 13.500h6M10 11v2M.5.500h4v3h-4zM2.500 4v9h4" />
          </svg>
        </TrayIcon>
        <TrayIcon aria-label="Volume">
          <svg width="17" height="16" fill="none" stroke="#fff">
            <path d="M1 5.500h2.500L8 1.500v12l-4.500-4H1z" />
            <circle cx="12" cy="11" r="4.500" fill="#c8283c" stroke="none" />
            <path d="M10 9l4 4M14 9l-4 4" />
          </svg>
        </TrayIcon>
        <Clock>
          5:54 PM
          <br />
          1/15/2024
        </Clock>
        <Notifications aria-label="1 notification">
          <svg width="24" height="24" viewBox="0 0 24 24">
            <path d="M1 2h16v13H9l-4 4v-4H1z" fill="#fff" />
            <path d="M4 5.500h10M4 8.500h10M4 11.500h6" stroke="#04050a" />
            <circle cx="16" cy="17" r="7.500" fill="#2b2c30" stroke="#999" />
            <text x="16" y="21" fontSize="12" fill="#fff" textAnchor="middle">1</text>
          </svg>
        </Notifications>
      </Tray>
    </TaskBar>
  );
}

function App() {
  return (
    <Desktop>
      <GlobalStyle />
      <TitleBar>
        <QuickAccess>
          <WordLogo />
          <Rule $w={3} $h={14} $color="#999" />
          <PlainButton $w={20} aria-label="Save">
            <SaveIcon />
          </PlainButton>
          <PlainButton $w={16} aria-label="Undo">
            <UndoIcon />
          </PlainButton>
          <PlainButton $w={8} aria-label="Undo history">
            <Arrow color="#b4b6ba" />
          </PlainButton>
          <PlainButton $w={20} aria-label="Redo">
            <RedoIcon />
          </PlainButton>
          <Rule $w={3} $h={14} $color="#999" />
          <PlainButton $w={10} aria-label="Customize toolbar">
            <svg width="7" height="7">
              <path d="M0 0h7v1H0zM0 3h7L3.500 6.500z" fill="#222" />
            </svg>
          </PlainButton>
        </QuickAccess>
        <Title>Document1 - Microsoft Word</Title>
        <WindowButtons>
          <PlainButton $w={46} aria-label="Minimize">
            <svg width="10" height="10" stroke="#999">
              <path d="M0 5.500h10" />
            </svg>
          </PlainButton>
          <PlainButton $w={46} aria-label="Restore">
            <svg width="10" height="10" fill="none" stroke="#999">
              <path d="M.5 2.500h7v7h-7zM2.500 2V.5h7v7H8" />
            </svg>
          </PlainButton>
          <PlainButton $w={46} aria-label="Close">
            <svg width="11" height="11" stroke="#999">
              <path d="M.5.500l10 10M10.500.500l-10 10" />
            </svg>
          </PlainButton>
        </WindowButtons>
      </TitleBar>
      <TabBar>
        <FileTab>File</FileTab>
        {tabs.map((tab, i) => (
          <Tab key={tab} $active={i === 0}>
            {tab}
          </Tab>
        ))}
        <TabTools>
          <PlainButton aria-label="Minimize the ribbon">
            <svg width="10" height="8" fill="none" stroke="#555">
              <path d="M5 1.500L1 5v2l4-3 4 3V5z" />
            </svg>
          </PlainButton>
          <PlainButton aria-label="Help">
            <HelpIcon />
          </PlainButton>
        </TabTools>
      </TabBar>
      {/* Ribbon groups */}
      <Ribbon />
      {/* Document */}
      <Workspace>
        <Canvas>
          <Page />
        </Canvas>
        <Scroller />
      </Workspace>
      <Status />
      {/* Windows taskbar */}
      <Tasks />
    </Desktop>
  );
}

export default App;
